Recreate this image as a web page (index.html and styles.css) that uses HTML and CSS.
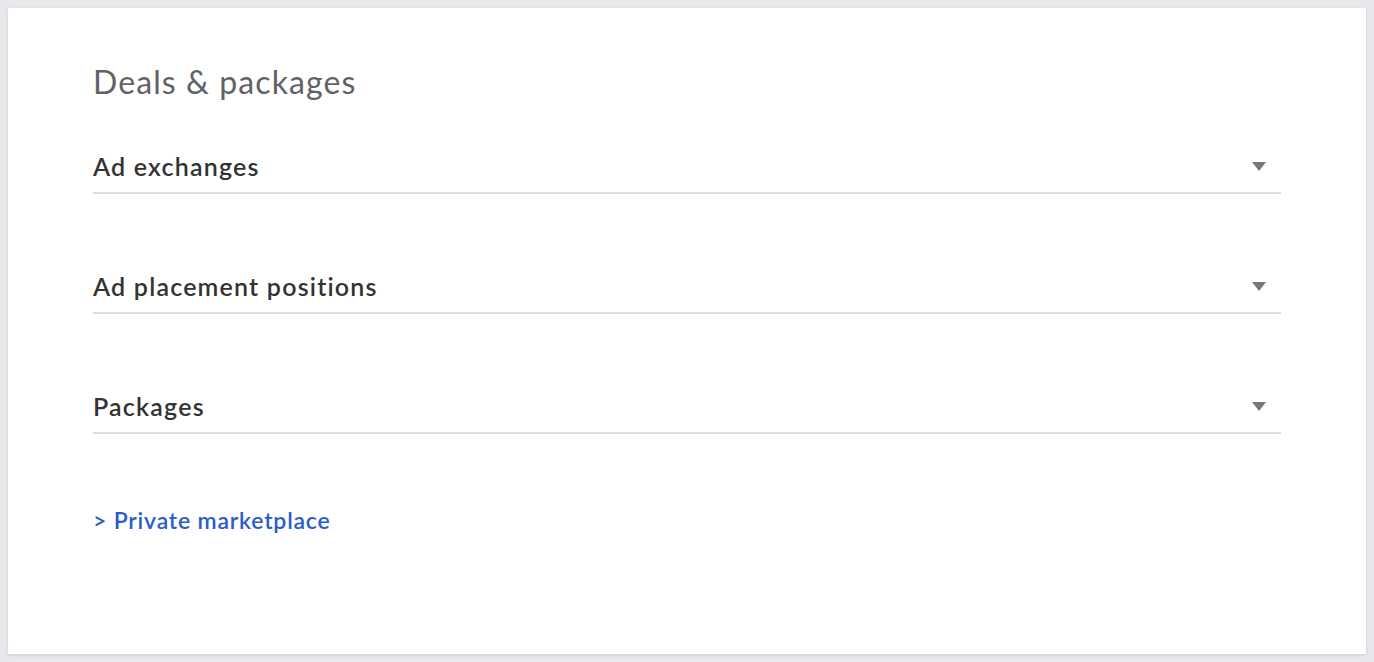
FILE: index.html
```html
<!DOCTYPE html>
<html>
<head>
<meta charset="utf-8">
<link rel="stylesheet" href="styles.css">
</head>
<body>
<main class="card">
  <h1 class="title">Deals &amp; packages</h1>
  <div class="field">
    <span class="label">Ad exchanges</span>
    <span class="caret"></span>
  </div>
  <div class="field">
    <span class="label">Ad placement positions</span>
    <span class="caret"></span>
  </div>
  <div class="field">
    <span class="label">Packages</span>
    <span class="caret"></span>
  </div>
  <a class="link" href="#">&gt; Private marketplace</a>
</main>
</body>
</html>
```
FILE: styles.css
```css
html, body {
  margin: 0;
  padding: 0;
  height: 100%;
}
body {
  background: #e8e8ec;
  padding: 8px;
  box-sizing: border-box;
  font-family: Lato, "Noto Sans", sans-serif;
}
.card {
  background: #fff;
  width: 1358px;
  height: 646px;
  box-sizing: border-box;
  padding: 56px 85px 0 85px;
  box-shadow: 0 1px 3px rgba(0,0,0,0.12);
  display: flex;
  flex-direction: column;
}
.title {
  margin: 0;
  font-size: 32px;
  font-weight: 400;
  letter-spacing: 1.1px;
  color: #5f6368;
  line-height: 36px;
  width: 1188px;
}
.field {
  width: 1188px;
  height: 52px;
  border-bottom: 2px solid #dedede;
  display: flex;
  align-items: center;
  justify-content: space-between;
  margin-top: 40px;
}
.field + .field {
  margin-top: 66px;
}
.label {
  font-size: 25px;
  font-weight: 600;
  letter-spacing: 1.2px;
  color: #333;
  line-height: 30px;
}
.caret {
  width: 0;
  height: 0;
  border-left: 7px solid transparent;
  border-right: 7px solid transparent;
  border-top: 9px solid #777;
  margin-right: 15px;
}
.link {
  margin-top: 73px;
  font-size: 23px;
  line-height: 26px;
  font-weight: 600;
  letter-spacing: 0.8px;
  color: #2b5cc7;
  text-decoration: none;
  align-self: flex-start;
}
```
